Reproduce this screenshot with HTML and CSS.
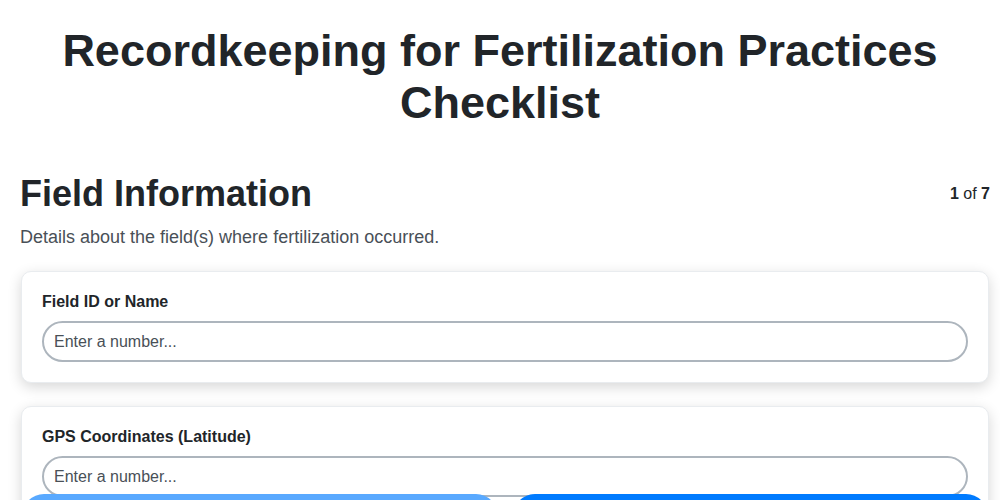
FILE: index.html
```html
<!DOCTYPE html>
<html lang="en">
<head>
<meta charset="utf-8">
<title>Recordkeeping for Fertilization Practices Checklist</title>
<link rel="stylesheet" href="styles.css">
</head>
<body>
<h1 class="title">Recordkeeping for Fertilization Practices Checklist</h1>
<div class="page">
  <div class="section-head">
    <h2 class="section-title">Field Information</h2>
    <div class="step"><b>1</b> of <b>7</b></div>
  </div>
  <p class="section-desc">Details about the field(s) where fertilization occurred.</p>
  <div class="card">
    <label class="field-label">Field ID or Name</label>
    <input class="field-input" type="text" placeholder="Enter a number...">
  </div>
  <div class="card">
    <label class="field-label">GPS Coordinates (Latitude)</label>
    <input class="field-input" type="text" placeholder="Enter a number...">
  </div>
  <div class="card">
    <label class="field-label">GPS Coordinates (Longitude)</label>
    <input class="field-input" type="text" placeholder="Enter a number...">
  </div>
</div>
<div class="nav">
  <button class="btn btn-prev">Previous</button>
  <button class="btn btn-next">Next</button>
</div>
</body>
</html>
```
FILE: styles.css
```css
* { box-sizing: border-box; }
body {
  margin: 0;
  font-family: "Liberation Sans", Arial, sans-serif;
  color: #212529;
  background: #fff;
}
.title {
  margin: 25px 20px 43px;
  font-size: 45px;
  line-height: 52px;
  text-align: center;
  font-weight: 700;
}
.page {
  padding: 0 10px 80px 20px;
}
.section-head {
  display: flex;
  justify-content: space-between;
  align-items: center;
}
.section-title {
  margin: 0;
  font-size: 36px;
  line-height: 43px;
  font-weight: 700;
}
.step {
  font-size: 16px;
  line-height: 24px;
}
.section-desc {
  margin: 9px 0 20px;
  font-size: 18px;
  line-height: 27px;
  color: #495057;
}
.card {
  background: #fff;
  border: 1px solid #e9ecef;
  border-radius: 10px;
  box-shadow: 0 4px 14px rgba(0,0,0,0.16);
  padding: 20px;
  margin: 0 1px 23px;
  display: flex;
  flex-direction: column;
}
.field-label {
  font-weight: 700;
  font-size: 16px;
  line-height: 19px;
  margin-bottom: 10px;
}
.field-input {
  height: 41px;
  border: 2px solid #adb5bd;
  border-radius: 21px;
  padding: 0 10px;
  font-family: "Liberation Sans", Arial, sans-serif;
  font-size: 16px;
  color: #212529;
  background: #fff;
  outline: none;
}
.field-input::placeholder { color: #495057; }
.nav {
  position: fixed;
  top: 494px;
  left: 22px;
  right: 12px;
  display: flex;
  gap: 15px;
}
.btn {
  flex: 1;
  height: 44px;
  border: none;
  border-radius: 22px;
  color: #fff;
  font-family: "Liberation Sans", Arial, sans-serif;
  font-size: 16px;
  font-weight: 700;
}
.btn-prev { background: #59a9ff; }
.btn-next { background: #007bff; }
```
